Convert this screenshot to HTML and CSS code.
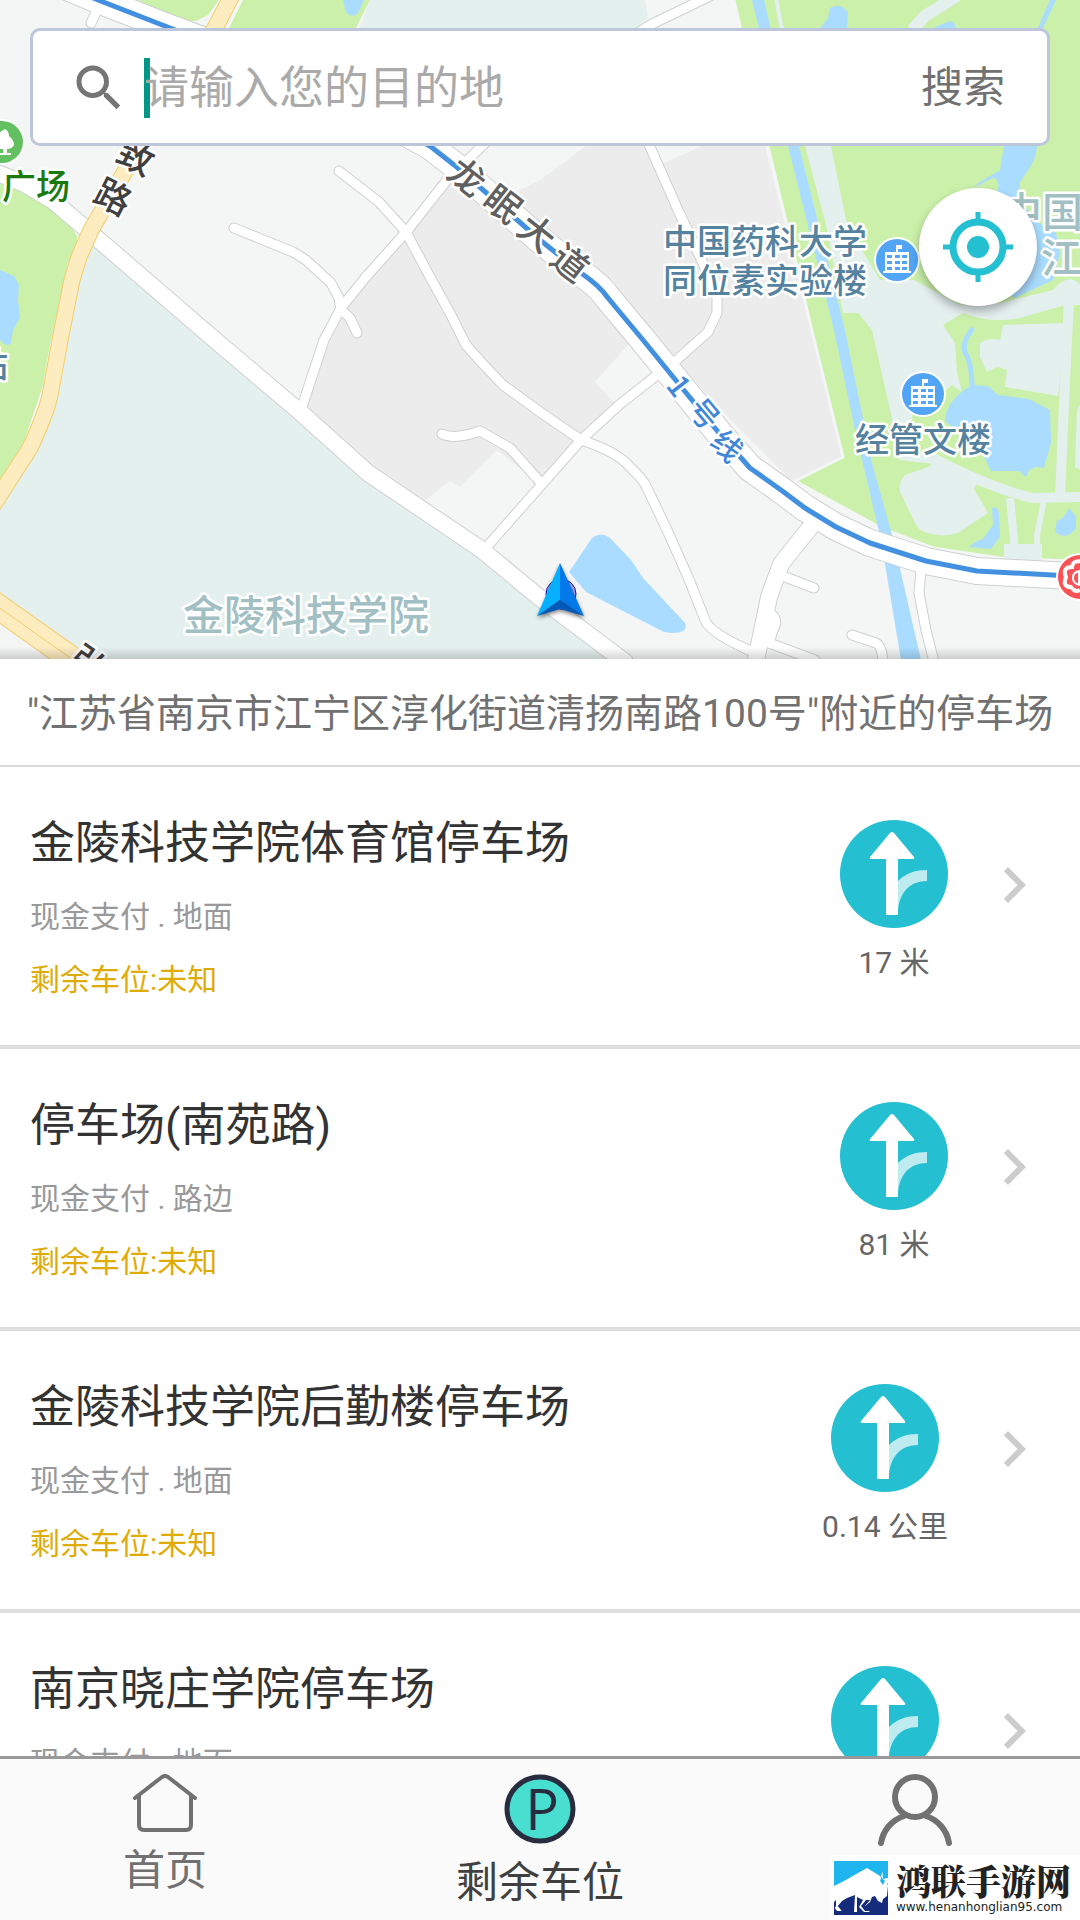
FILE: index.html
```html
<!DOCTYPE html>
<html lang="zh-CN">
<head>
    <meta charset="UTF-8">
    <meta name="viewport" content="width=device-width, initial-scale=1.0">
    <title>剩余车位</title>
    <link rel="stylesheet" href="styles.css">
</head>
<body>
    <!-- 共用图标 -->
    <svg class="sprite" aria-hidden="true">
        <symbol id="icon-route" viewBox="0 0 108 108">
            <circle cx="54" cy="54" r="54" fill="#25bfd2"/>
            <path d="M58 61C66 53 76 50 87 50V61C70 61 60 72 58 90Z" fill="#bdebf0"/>
            <path d="M46 95V39H31Q29 39 30 37L50 13Q52 11 54 13L74 37Q75 39 73 39H58V95Z" fill="#fff"/>
        </symbol>
        <symbol id="icon-more" viewBox="0 0 24 24">
            <path d="M10 6L8.6 7.4 13.2 12l-4.6 4.6L10 18l6-6z" fill="#ccc"/>
        </symbol>
        <symbol id="icon-building" viewBox="0 0 46 46">
            <circle cx="23" cy="23" r="23" fill="#fff"/>
            <circle cx="23" cy="23" r="21" fill="#52a5f5"/>
            <path d="M22 15V8h6v4h-4v3h11v19h2v2H9v-2h2V15zM13 18v3h5v-3zm8 0v3h5v-3zm7 0v3h5v-3zM13 24v3h5v-3zm8 0v3h5v-3zm7 0v3h5v-3zM13 30v3h5v-3zm8 0v3h5v-3zm7 0v3h5v-3z" fill="#fff" fill-rule="evenodd"/>
        </symbol>
    </svg>

    <section class="map">
        <svg class="map-canvas" viewBox="0 0 1080 659" role="img" aria-label="地图">
            <rect width="1080" height="659" fill="#f4f5f5"/>

            <!-- 地块 -->
            <path class="campus" d="M85 236L215 345L300 412L368 473L482 550L625 660H75L0 605V495L30 448L51 390L61 340L79 257Z"/>
            <path class="campus" d="M370 0H645L648 17L636 30L560 80L340 80Z"/>
            <path class="block" d="M301 412L324 340L341 308L406 232L452 175L500 200L540 180L586 146H765L812 330L842 457L793 482L743 433L648 330L626 347L595 382L614 402L581 440L540 485L497 450L460 487L450 481L423 502L369 473Z"/>
            <path d="M645 146L664 163L702 146Z" fill="#f4f5f5"/>
            <path class="park" d="M0 184L15 188L28 194L55 212L72 228L77 236L77 250L68 262L62 290L50 345L43 385L24 442L0 480Z"/>
            <path class="park" d="M138 0L182 21H196L208 15L219 0Z"/>
            <path class="park" d="M243 0L229 28V60H340L356 28L370 0Z"/>
            <path class="park edge" d="M733 -4L768 146L813 335L843 457L795 481L881 528L933 548L1000 558L1090 562V-4Z"/>

            <path class="campus" d="M805 146H831L846 220L862 250L880 280H914L960 305L1000 303L1053 290Q1068 272 1080 284V305L1062 306L1020 318Q990 324 963 313L943 325L955 343L957 373L962 392L952 385L943 393L913 407L912 423H893L872 330L858 313H843L826 225Z"/>
            <path class="campus" d="M980 343Q990 337 1000 340L1003 325L1066 323L1058 396L1005 387L1007 370L997 367L987 372L980 357Z"/>
            <path class="campus" d="M900 492Q898 482 905 475L928 467Q935 463 930 456L953 463L980 478L974 489L988 513L958 533Q940 539 920 530L915 523Z"/>
            <g class="path">
                <path d="M900 455L935 459Q985 486 1032 498L1080 497" stroke-width="10"/>
                <path d="M1069 300Q1063 420 1060 498" stroke-width="10"/>
                <path d="M1010 498L1014 540L1013 562" stroke-width="8"/>
                <path d="M1044 500L1037 535L1038 562" stroke-width="6"/>
                <path d="M1004 552H1042" stroke-width="16"/>
                <path d="M776 -2L784 40" stroke-width="4"/>
                <path d="M957 -4L925 16L912 30" stroke-width="12"/>
            </g>
            <path class="campus" d="M1077 410L1080 405V470L1075 467Z"/>

            <!-- 水面 -->
            <g class="water">
                <path d="M0 270L14 276L19 285L18 300L20 318L13 330L11 343Q7 348 0 340Z"/>
                <path d="M343 0L346 12Q353 19 358 13L364 0Z"/>
                <path d="M752 0H764L799 146L845 330L872 463L893 538L921 660H901L881 540L855 430L834 330L788 146Z"/>
                <path d="M820 28L828 18L830 8Q840 2 848 12L847 30Z"/>
                <path d="M933 28L950 21Q954 21 957 30Z"/>
                <path d="M1050 0H1056L1042 30H1037Z"/>
                <path d="M1004 146H1037Q1036 160 1028 170L1020 182L1019 200L1039 223L1056 233L1060 253L1053 280L1015 298L990 280L998 190Q1000 178 992 178L972 189L980 182L1000 170Z"/>
                <path d="M972 385L988 386L998 395L1029 399L1050 410L1051 443L1044 468L1036 467L1029 470L1026 477L1019 471L991 471L982 453L945 421Q946 400 972 385Z"/>
                <path d="M992 508Q998 506 999 513L1000 537L991 549L969 547Q975 541 983 539L993 525Z"/>
                <path d="M1069 508L1076 517V528Q1067 541 1055 532L1057 521Q1064 519 1069 508Z"/>
                <path d="M592 538Q601 531 610 538L631 560L643 578L685 623Q689 633 672 633L664 632L586 592L569 572Z"/>
            </g>
            <path d="M973 328Q960 345 966 354Q972 364 972 390" fill="none" stroke="#aadcff" stroke-width="5"/>

            <!-- 小路：先描边，再填白 -->
            <defs>
                <g id="lanes">
                    <path d="M98 8L91 23"/>
                    <path d="M710 -4L650 25L560 85L484 144L447 180L407 231L365 278L341 308L324 340L301 410"/>
                    <path d="M339 171L379 202L406 232L430 277L451 315L466 345L482 363L503 385L540 412L581 440Q618 452 630 467Q644 480 647 488L667 530L688 577L705 620Q710 634 760 655"/>
                    <path d="M234 228L293 252L306 260L331 283L339 298L341 310L350 318L357 333"/>
                    <path d="M647 140L678 210L703 263L717 297V313L708 332L671 365L657 375L619 405L581 440L484 550"/>
                    <path d="M442 434Q455 440 480 431L510 448L541 483"/>
                    <path d="M780 575L814 588"/>
                    <path d="M769 612Q780 620 773 630L769 643L815 660"/>
                    <path d="M852 635L876 643Q882 646 883 662"/>
                    <path d="M921 570L919 593L926 630L934 662"/>
                </g>
                <g id="roads">
                    <path d="M-10 170L25 184L52 200L85 228L215 340L300 412L368 473L482 550L540 598L625 662"/>
                    <path d="M812 525L781 564L769 597L755 665"/>
                </g>
                <path id="metro" d="M60 -16L98 0L170 28L300 76L430 146L458 168L540 240L581 273Q600 286 608 298L643 340L678 383L719 433L750 468L781 490L805 508L836 527L870 543L926 561L977 571L1090 577"/>
                <path id="avenue" d="M236 -12L215 28L124 173L91 230L79 257L72 280L61 335L51 390Q48 410 30 448L-6 504"/>
            </defs>
            <g class="line">
                <use href="#lanes" stroke="#cfd0d0" stroke-width="11"/>
                <use href="#roads" stroke="#cfd0d0" stroke-width="18"/>
                <use href="#metro" stroke="#cfd0d0" stroke-width="28"/>
                <use href="#lanes" stroke="#fff" stroke-width="9"/>
                <use href="#roads" stroke="#fff" stroke-width="16"/>
                <use href="#metro" stroke="#fff" stroke-width="26"/>
                <use href="#avenue" stroke="#f4cd69" stroke-width="17"/>
                <use href="#avenue" stroke="#fdecc0" stroke-width="15"/>
                <path d="M-20 594L100 679" stroke="#f4cd69" stroke-width="26"/>
                <path d="M-20 594L100 679" stroke="#fdecc0" stroke-width="24"/>
                <path d="M-20 594L100 679" stroke="#f4cd69" stroke-width="1"/>
                <use href="#metro" stroke="#4390e0" stroke-width="5"/>
            </g>

            <!-- 路名 -->
            <g class="label road-name">
                <text transform="translate(136 157) rotate(27)" dy="13">致</text>
                <text transform="translate(113 197) rotate(27)" dy="13">路</text>
                <text transform="translate(89 664) rotate(35)" dy="13">弘</text>
            </g>
            <g class="label avenue-name">
                <text transform="translate(467 177) rotate(38)" dy="13">龙</text>
                <text transform="translate(503 204) rotate(38)" dy="13">眠</text>
                <text transform="translate(537 233) rotate(38)" dy="13">大</text>
                <text transform="translate(570 263) rotate(38)" dy="13">道</text>
            </g>
            <g class="label metro-name">
                <text transform="translate(679 386) rotate(52)" dy="11">1</text>
                <text transform="translate(704 414) rotate(50)" dy="11">号</text>
                <text transform="translate(727 446) rotate(45)" dy="11">线</text>
            </g>

            <!-- 地点 -->
            <g class="label place">
                <text x="663" y="254">中国药科大学</text>
                <text x="663" y="293">同位素实验楼</text>
                <text x="855" y="452">经管文楼</text>
                <text x="-26" y="377">站</text>
            </g>
            <g class="label school">
                <text x="183" y="630">金陵科技学院</text>
                <text x="1001" y="227">中国</text>
                <text x="1041" y="273">江</text>
            </g>
            <text class="label square" x="2" y="199">广场</text>
            <use href="#icon-building" x="874" y="237" width="46" height="46"/>
            <use href="#icon-building" x="900" y="371" width="46" height="46"/>
            <circle cx="2" cy="142" r="23" fill="#fff"/>
            <circle cx="2" cy="142" r="21" fill="#62c060"/>
            <path d="M5 129Q9 131 9 136Q14 140 14 145Q12 149 7 149V153H11V155H-2V153H3V149H-4V136Q1 131 5 129Z" fill="#fff"/>
            <circle cx="1080" cy="577" r="24" fill="#fff"/>
            <circle cx="1080" cy="577" r="22" fill="#f95357"/>
            <g fill="none" stroke="#fff">
                <path d="M1084 562Q1073 559 1072 567Q1062 567 1066 577Q1062 587 1071 587Q1075 593 1080 590" stroke-width="4"/>
                <path d="M1082 571Q1073 571 1073 578Q1073 584 1080 585M1079 572V585" stroke-width="2"/>
            </g>

            <!-- 当前位置 -->
            <circle cx="561" cy="594" r="15" fill="#8b7fd8" fill-opacity=".7" stroke="#1212b8" stroke-width="1"/>
            <path class="marker-shadow" d="M560 566L538 618L560 611L584 618Z"/>
            <path d="M560 563L537 616L560 600Z" fill="#03b0ff"/>
            <path d="M560 563L584 616L560 600Z" fill="#0279ea"/>
            <path d="M537 616L560 600L584 616L560 609Z" fill="#0159b8"/>
        </svg>

        <form class="search" role="search">
            <svg class="search-icon" viewBox="0 0 24 24" aria-hidden="true">
                <path d="M15.5 14h-.79l-.28-.27A6.47 6.47 0 0 0 16 9.5 6.5 6.5 0 1 0 9.5 16c1.61 0 3.09-.59 4.23-1.57l.27.28v.79l5 4.99L20.49 19l-4.99-5zm-6 0C7.01 14 5 11.99 5 9.5S7.01 5 9.5 5 14 7.01 14 9.5 11.99 14 9.5 14z" fill="#757575"/>
            </svg>
            <div class="search-field">
                <span class="caret"></span>
                <input class="search-input" type="text" aria-label="目的地" placeholder="请输入您的目的地">
            </div>
            <button class="search-button" type="button">搜索</button>
        </form>

        <button class="locate" type="button" aria-label="定位">
            <svg viewBox="0 0 72 72" aria-hidden="true">
                <circle cx="36" cy="36" r="25" fill="none" stroke="#25bfd2" stroke-width="7"/>
                <circle cx="36" cy="36" r="11" fill="#25bfd2"/>
                <path d="M36 1V11M36 61V71M1 36H11M61 36H71" stroke="#25bfd2" stroke-width="5"/>
            </svg>
        </button>
    </section>

    <main class="results">
        <h1 class="results-title">"江苏省南京市江宁区淳化街道清扬南路100号"附近的停车场</h1>
        <ul class="lots">
            <li class="lot">
                <a class="lot-info" href="#">
                    <span class="lot-name">金陵科技学院体育馆停车场</span>
                    <span class="lot-type">现金支付 . 地面</span>
                    <span class="lot-left">剩余车位:未知</span>
                </a>
                <button class="route" type="button">
                    <svg class="route-icon" aria-hidden="true"><use href="#icon-route"/></svg>
                    <span>17 米</span>
                </button>
                <svg class="more" aria-hidden="true"><use href="#icon-more"/></svg>
            </li>
            <li class="lot">
                <a class="lot-info" href="#">
                    <span class="lot-name">停车场(南苑路)</span>
                    <span class="lot-type">现金支付 . 路边</span>
                    <span class="lot-left">剩余车位:未知</span>
                </a>
                <button class="route" type="button">
                    <svg class="route-icon" aria-hidden="true"><use href="#icon-route"/></svg>
                    <span>81 米</span>
                </button>
                <svg class="more" aria-hidden="true"><use href="#icon-more"/></svg>
            </li>
            <li class="lot">
                <a class="lot-info" href="#">
                    <span class="lot-name">金陵科技学院后勤楼停车场</span>
                    <span class="lot-type">现金支付 . 地面</span>
                    <span class="lot-left">剩余车位:未知</span>
                </a>
                <button class="route" type="button">
                    <svg class="route-icon" aria-hidden="true"><use href="#icon-route"/></svg>
                    <span>0.14 公里</span>
                </button>
                <svg class="more" aria-hidden="true"><use href="#icon-more"/></svg>
            </li>
            <li class="lot">
                <a class="lot-info" href="#">
                    <span class="lot-name">南京晓庄学院停车场</span>
                    <span class="lot-type">现金支付 . 地面</span>
                    <span class="lot-left">剩余车位:未知</span>
                </a>
                <button class="route" type="button">
                    <svg class="route-icon" aria-hidden="true"><use href="#icon-route"/></svg>
                    <span>0.14 公里</span>
                </button>
                <svg class="more" aria-hidden="true"><use href="#icon-more"/></svg>
            </li>
        </ul>
    </main>

    <nav class="tabs">
        <a class="tab" href="#">
            <svg width="64" height="58" viewBox="0 0 64 58" aria-hidden="true">
                <path d="M2 24L29 3Q32 1 35 3L62 24M6 22V51Q6 56 11 56H53Q58 56 58 51V22" fill="none" stroke="#717171" stroke-width="4" stroke-linecap="round"/>
            </svg>
            <span>首页</span>
        </a>
        <a class="tab active" href="#">
            <svg width="72" height="70" viewBox="0 0 72 70" aria-hidden="true">
                <ellipse cx="36" cy="35" rx="33" ry="32" fill="#48dfd0" stroke="#292c3e" stroke-width="5"/>
                <text class="tab-p" x="38" y="56">P</text>
            </svg>
            <span>剩余车位</span>
        </a>
        <a class="tab" href="#" aria-label="我的">
            <svg width="74" height="72" viewBox="0 0 74 72" aria-hidden="true">
                <path d="M3 69A34 34 0 0 1 26 42M71 69A34 34 0 0 0 48 42" fill="none" stroke="#717171" stroke-width="6" stroke-linecap="round"/>
                <circle cx="37" cy="23" r="20" fill="none" stroke="#717171" stroke-width="6"/>
            </svg>
        </a>
    </nav>

    <a class="site" href="#">
        <svg class="site-logo" viewBox="0 0 54 54" aria-hidden="true">
            <rect width="54" height="54" fill="#1fb6f0"/>
            <path d="M0 30H54V54H0Z" fill="#152c7c"/>
            <path d="M54 24V40H50Z" fill="#152c7c"/>
            <path d="M0 25L10 20L33 7L46 15L48 21L54 24L53 35L49 38L48 42L44 40L41 35L38 36L36 41L30 46L36 51H30L25 46L29 39L23 36V51H20L21 34L13 37L8 40L4 45L8 50H3L0 46Z" fill="#fff"/>
            <path d="M0 41L2 39V45L0 48ZM12 40L7 45L11 50H8L4 45L9 40ZM36 39L31 45L35 50H31L27 45L32 39Z" fill="#152c7c"/>
            <path d="M49 11Q45 17 47 20Q49 23 52 24L54 22V17L49 18Z" fill="#fff"/>
            <path d="M49 12L48 17L51 20L49 24L46 20Z" fill="#1fb6f0"/>
        </svg>
        <span class="site-text">
            <strong class="site-name">鸿联手游网</strong>
            <span class="site-url">www.henanhonglian95.com</span>
        </span>
    </a>
</body>
</html>
```
FILE: styles.css
```css
* {
    box-sizing: border-box;
}
body {
    margin: 0;
    height: 100vh;
    display: flex;
    flex-direction: column;
    overflow: hidden;
    background-color: #fff;
    font-family: Roboto, "Noto Sans CJK SC", sans-serif;
    color: #717171;
}
a {
    color: inherit;
    text-decoration: none;
}
button {
    border: none;
    padding: 0;
    background: none;
    font: inherit;
    color: inherit;
    cursor: pointer;
}
.sprite {
    display: none;
}

/* 地图 */
.map {
    position: relative;
    flex: none;
}
.map::after {
    content: "";
    position: absolute;
    left: 0;
    right: 0;
    bottom: 0;
    height: 12px;
    background: linear-gradient(to bottom, rgba(0, 0, 0, 0), rgba(0, 0, 0, 0.16));
}
.map-canvas {
    display: block;
    width: 100%;
}
.campus {
    fill: #e4f0ee;
}
.block {
    fill: #ececec;
}
.park {
    fill: #cbf0aa;
}
.edge {
    stroke: #f4f5f5;
    stroke-width: 3px;
}
.water {
    fill: #aadcff;
}
.path {
    fill: none;
    stroke: #e4f0ee;
}
.line {
    fill: none;
    stroke-linecap: round;
    stroke-linejoin: round;
}
.label {
    font-family: "Noto Sans CJK SC", sans-serif;
    font-weight: 500;
    stroke: #fff;
    stroke-width: 5px;
    stroke-linejoin: round;
    paint-order: stroke;
}
.road-name,
.avenue-name {
    font-size: 36px;
    text-anchor: middle;
    fill: #404040;
}
.avenue-name {
    fill: #606060;
}
.metro-name {
    font-size: 30px;
    text-anchor: middle;
    fill: #3f87d8;
}
.place {
    font-size: 34px;
    fill: #55839f;
}
.school {
    font-size: 41px;
    fill: #a2bfc3;
}
.square {
    font-size: 34px;
    fill: #1a7a10;
}
.marker-shadow {
    fill: rgba(0, 0, 0, 0.5);
    filter: blur(2px);
}

/* 搜索框 */
.search {
    position: absolute;
    top: 28px;
    left: 30px;
    right: 30px;
    height: 118px;
    display: flex;
    align-items: center;
    padding: 2px 42px 0 36px;
    border: 3px solid #bdc6da;
    border-radius: 10px;
    background-color: #fff;
}
.search-icon {
    width: 60px;
    height: 60px;
    margin-right: 15px;
}
.search-field {
    position: relative;
    flex: 1;
    display: flex;
}
.caret {
    position: absolute;
    top: 0;
    left: 0;
    width: 6px;
    height: 60px;
    background-color: #009688;
}
.search-input {
    position: relative;
    width: 100%;
    height: 60px;
    padding: 0;
    border: none;
    outline: none;
    background: transparent;
    font-family: inherit;
    font-size: 45px;
}
.search-input::placeholder {
    color: #aaa;
}
.search-button {
    font-size: 42px;
    line-height: 60px;
}

/* 定位按钮 */
.locate {
    position: absolute;
    top: 188px;
    right: 43px;
    width: 118px;
    height: 118px;
    display: flex;
    align-items: center;
    justify-content: center;
    border-radius: 50%;
    background-color: #fff;
    box-shadow: 0 5px 10px rgba(0, 0, 0, 0.3);
}
.locate svg {
    width: 72px;
    height: 72px;
}

/* 停车场列表 */
.results {
    flex: 1;
    min-height: 0;
    overflow: hidden;
}
.results-title {
    margin: 0;
    padding: 27px 0 23px;
    border-bottom: 2px solid #d8d8d8;
    font-size: 39px;
    font-weight: normal;
    line-height: 56px;
    text-align: center;
    white-space: nowrap;
}
.lots {
    margin: 0;
    padding: 0;
    list-style: none;
}
.lot {
    display: flex;
    align-items: flex-start;
    height: 282px;
    padding: 0 30px;
    border-bottom: 4px solid #dfdfdf;
}
.lot-info {
    flex: 1;
    display: flex;
    flex-direction: column;
    padding-top: 47px;
}
.lot-name {
    font-size: 45px;
    line-height: 60px;
    color: #333;
}
.lot-type,
.lot-left {
    font-size: 30px;
    line-height: 45px;
}
.lot-type {
    margin-top: 20px;
    color: #999;
}
.lot-left {
    margin-top: 18px;
    color: #dfab06;
}
.route {
    display: flex;
    flex-direction: column;
    align-items: center;
    gap: 15px;
    padding-top: 53px;
    font-size: 30px;
    line-height: 40px;
    color: #666;
}
.route-icon {
    width: 108px;
    height: 108px;
}
.more {
    width: 72px;
    height: 72px;
    margin: 82px 0 0 30px;
}

/* 底部导航 */
.tabs {
    flex: none;
    display: grid;
    grid-template-columns: 11fr 14fr 11fr;
    border-top: 3px solid #999;
    background-color: #fafafa;
}
.tab {
    display: flex;
    flex-direction: column;
    align-items: center;
    gap: 15px;
    padding: 15px 0 13px;
    font-size: 42px;
    line-height: 48px;
}
.active {
    color: #404040;
}
.tab-p {
    font-family: "Open Sans", sans-serif;
    font-size: 56px;
    font-weight: 500;
    text-anchor: middle;
    fill: #292c3e;
}

/* 右下角站点标识 */
.site {
    position: absolute;
    right: 0;
    bottom: 0;
    display: flex;
    align-items: center;
    gap: 8px;
    padding: 5px 9px 5px 4px;
    background-color: #fff;
    color: #222;
}
.site-logo {
    width: 54px;
    height: 54px;
}
.site-text {
    display: flex;
    flex-direction: column;
}
.site-name {
    font-family: "Noto Serif CJK SC", "Noto Sans CJK SC", serif;
    font-size: 35px;
    font-weight: 900;
    line-height: 40px;
}
.site-url {
    font-family: "DejaVu Sans", sans-serif;
    font-size: 12px;
    line-height: 15px;
}
```
